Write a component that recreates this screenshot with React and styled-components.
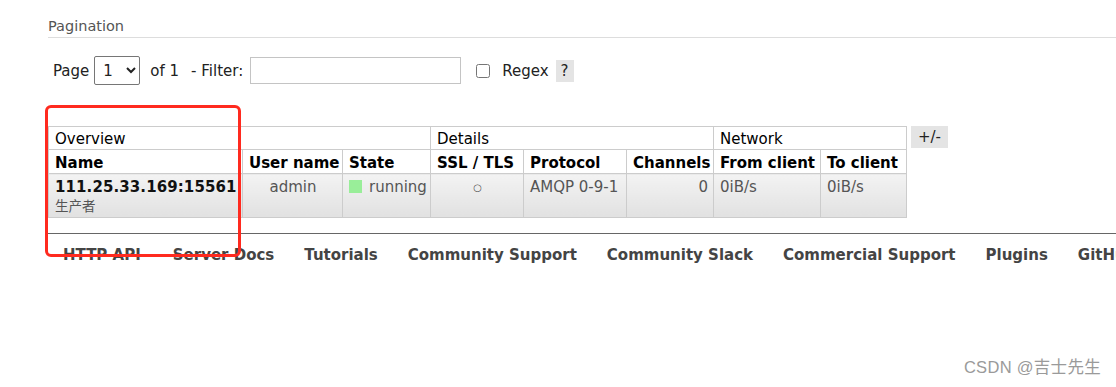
import React from 'react'
import styled, { createGlobalStyle } from 'styled-components'

const GlobalStyle = createGlobalStyle`
    html, body {
        margin: 0;
        padding: 0;
        background: #ffffff;
    }
    body {
        font-family: 'DejaVu Sans', Verdana, sans-serif;
        font-size: 15px;
        color: #484848;
    }
`

const Page = styled.div`
    position: relative;
    width: 1116px;
    height: 387px;
    overflow: hidden;
    padding: 15px 0 0 48px;
    box-sizing: border-box;
`

const SectionTitle = styled.h2`
    margin: 0;
    font-size: 14.5px;
    font-weight: normal;
    color: #555;
    line-height: 22px;
    padding-bottom: 0;
    border-bottom: 1px solid #dddddd;
`

const FilterRow = styled.div`
    display: flex;
    align-items: center;
    padding: 18px 0 0 5px;
    height: 29px;
    color: #222;
`

const Label = styled.span`
    margin-right: ${(p) => p.gap || 0}px;
    white-space: nowrap;
`

const PageSelect = styled.select`
    width: 46px;
    height: 29px;
    font-family: 'DejaVu Sans', Verdana, sans-serif;
    font-size: 15px;
    color: #222;
    border: 1px solid #767676;
    border-radius: 2px;
    background: #fff;
    margin-right: 10px;
    padding-left: 4px;
`

const FilterInput = styled.input`
    width: 211px;
    height: 27px;
    box-sizing: border-box;
    border: 1px solid #c4c4c4;
    margin: 0 15px 0 0;
    font-size: 15px;
`

const Check = styled.input`
    width: 14px;
    height: 14px;
    margin: 0 12px 0 0;
`

const HelpTag = styled.span`
    display: inline-flex;
    align-items: center;
    justify-content: center;
    width: 18px;
    height: 22px;
    margin-left: 7px;
    background: #e4e4e4;
    color: #222;
`

const TableRow = styled.div`
    display: flex;
    align-items: flex-start;
    gap: 4px;
    margin-top: 41px;
`

const Table = styled.table`
    border-collapse: collapse;
    table-layout: fixed;
    width: 858px;
    color: #000;
`

const GroupCell = styled.th`
    text-align: left;
    font-weight: normal;
    border: 1px solid #cccccc;
    padding: 2px 6px 0;
    line-height: 20px;
    background: #fff;
`

const HeadCell = styled.th`
    text-align: ${(p) => p.align || 'left'};
    font-weight: bold;
    border: 1px solid #cccccc;
    padding: 3px 5px 0 6px;
    line-height: 20px;
    white-space: nowrap;
    overflow: hidden;
    background: #fff;
`

const DataRow = styled.tr`
    background: linear-gradient(#f3f3f3, #e1e1e1);
`

const Cell = styled.td`
    text-align: ${(p) => p.align || 'left'};
    vertical-align: top;
    border: 1px solid #cccccc;
    padding: 4px 5px 0 6px;
    height: 39px;
    line-height: 18px;
    color: #555;
    white-space: nowrap;
    background: linear-gradient(#f3f3f3, #e1e1e1);
`

const ConnName = styled.div`
    font-weight: bold;
    color: #111;
    letter-spacing: 0.1px;
`

const SubLabel = styled.div`
    font-size: 13.5px;
    color: #555;
    font-family: 'DejaVu Sans', 'Noto Sans CJK SC', sans-serif;
    line-height: 21px;
`

const StateBox = styled.span`
    display: inline-block;
    width: 13px;
    height: 13px;
    background: #99ee99;
    margin-right: 7px;
    vertical-align: -1px;
`

const Ring = styled.span`
    font-size: 10px;
    vertical-align: 1px;
`

const ToggleColumns = styled.span`
    display: inline-flex;
    align-items: center;
    justify-content: center;
    width: 37px;
    height: 22px;
    background: #e4e4e4;
    color: #222;
`

const Footer = styled.div`
    margin-top: 15px;
    border-top: 1px solid #666666;
    display: flex;
    white-space: nowrap;
    padding-top: 11px;
`

const FooterLink = styled.a`
    font-weight: bold;
    color: #444;
    text-decoration: none;
    margin: 0 15px;
    line-height: 20px;
    &:nth-child(2) {
        margin-left: 17px;
    }
`

const Annotation = styled.div`
    position: absolute;
    left: 45px;
    top: 105px;
    width: 196px;
    height: 152px;
    border: 3px solid #ff2a1f;
    border-radius: 6px;
    box-sizing: border-box;
    pointer-events: none;
`

const Watermark = styled.div`
    position: absolute;
    right: 15px;
    bottom: 9px;
    font-family: 'Liberation Sans', 'Noto Sans CJK SC', sans-serif;
    font-size: 16.5px;
    letter-spacing: 0.3px;
    color: #9a9a9a;
`

const columns = [
    { label: 'Name', width: 194 },
    { label: 'User name', width: 100 },
    { label: 'State', width: 88 },
    { label: 'SSL / TLS', width: 93 },
    { label: 'Protocol', width: 103 },
    { label: 'Channels', width: 87, align: 'right' },
    { label: 'From client', width: 107 },
    { label: 'To client', width: 86 },
]

const links = [
    'HTTP API',
    'Server Docs',
    'Tutorials',
    'Community Support',
    'Community Slack',
    'Commercial Support',
    'Plugins',
    'GitHub',
    'Changelog',
]

const App = () => {
    return (
        <Page>
            <GlobalStyle />
            <SectionTitle>Pagination</SectionTitle>
            <FilterRow>
                <Label gap={5}>Page</Label>
                <PageSelect defaultValue="1">
                    <option value="1">1</option>
                </PageSelect>
                <Label gap={12}>of 1</Label>
                <Label gap={7}>- Filter:</Label>
                <FilterInput type="text" />
                <Check type="checkbox" />
                <Label>Regex</Label>
                <HelpTag>?</HelpTag>
            </FilterRow>

            <TableRow>
                <Table>
                    <colgroup>
                        {columns.map((c) => (
                            <col key={c.label} style={{ width: c.width }} />
                        ))}
                    </colgroup>
                    <thead>
                        <tr>
                            <GroupCell colSpan={3}>Overview</GroupCell>
                            <GroupCell colSpan={3}>Details</GroupCell>
                            <GroupCell colSpan={2}>Network</GroupCell>
                        </tr>
                        <tr>
                            {columns.map((c) => (
                                <HeadCell key={c.label} align={c.align}>{c.label}</HeadCell>
                            ))}
                        </tr>
                    </thead>
                    <tbody>
                        <DataRow>
                            <Cell>
                                <ConnName>111.25.33.169:15561</ConnName>
                                <SubLabel>生产者</SubLabel>
                            </Cell>
                            <Cell align="center">admin</Cell>
                            <Cell><StateBox />running</Cell>
                            <Cell align="center"><Ring>○</Ring></Cell>
                            <Cell>AMQP 0-9-1</Cell>
                            <Cell align="right">0</Cell>
                            <Cell>0iB/s</Cell>
                            <Cell>0iB/s</Cell>
                        </DataRow>
                    </tbody>
                </Table>
                <ToggleColumns>+/-</ToggleColumns>
            </TableRow>

            <Footer>
                {links.map((l) => (
                    <FooterLink key={l} href="#">{l}</FooterLink>
                ))}
            </Footer>

            <Annotation />
            <Watermark>CSDN @吉士先生</Watermark>
        </Page>
    )
}

export default App
